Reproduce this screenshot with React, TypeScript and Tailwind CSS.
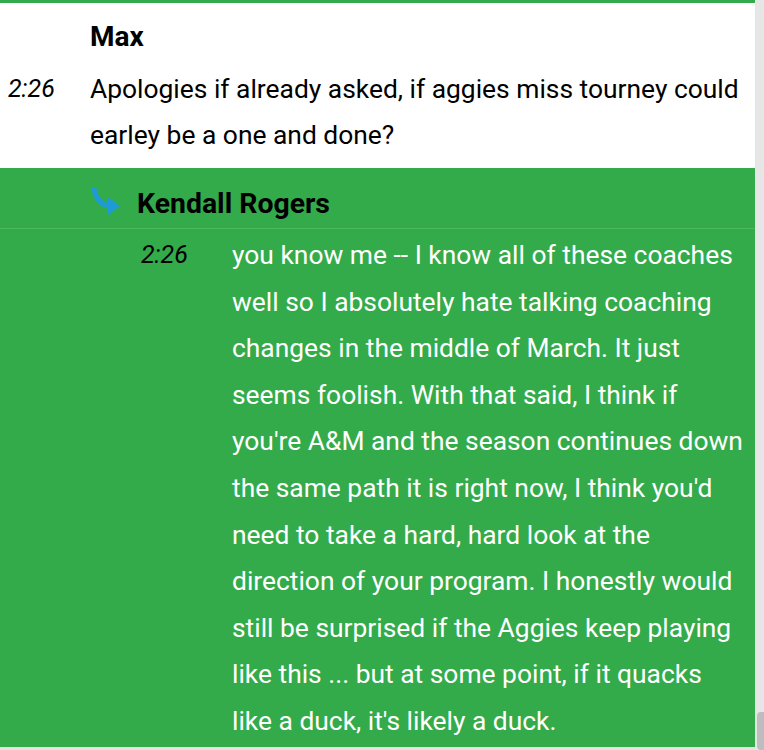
import React from "react";

const reply = [
  "you know me -- I know all of these coaches",
  "well so I absolutely hate talking coaching",
  "changes in the middle of March. It just",
  "seems foolish. With that said, I think if",
  "you're A&M and the season continues down",
  "the same path it is right now, I think you'd",
  "need to take a hard, hard look at the",
  "direction of your program. I honestly would",
  "still be surprised if the Aggies keep playing",
  "like this ... but at some point, if it quacks",
  "like a duck, it's likely a duck.",
];

function ReplyArrow() {
  return (
    <svg width="32" height="32" viewBox="0 0 32 32" className="shrink-0">
      <path d="M3 2 C5 12 10 18 19 19" stroke="#1e9ad6" strokeWidth="5" fill="none" strokeLinecap="round" />
      <path d="M17 10 L29 19 L17 28 Z" fill="#1e9ad6" />
    </svg>
  );
}

export default function App() {
  return (
    <div className="w-[764px] h-[750px] overflow-hidden flex bg-white font-['Roboto',sans-serif]">
      <div className="flex-1 flex flex-col">
        <div className="h-[3px] bg-[#33ab4a]" />
        {/* question */}
        <div className="h-[165px] bg-white flex flex-col pt-[16px]">
          <div className="pl-[90px] text-[28px] font-bold text-black leading-[36px]">Max</div>
          <div className="flex mt-[11px]">
            <div className="w-[90px] pl-[8px] text-[25px] italic text-black leading-[46px]">2:26</div>
            <div className="flex-1 text-[26.4px] text-black leading-[46px] whitespace-nowrap">
              Apologies if already asked, if aggies miss tourney could
              <br />
              earley be a one and done?
            </div>
          </div>
        </div>
        {/* answer */}
        <div className="flex-1 bg-[#33ab4a] flex flex-col">
          <div className="h-[61px] flex items-center pt-[10px] pl-[91px] gap-[14px] border-b border-[#4cb95f]">
            <ReplyArrow />
            <span className="text-[28.4px] font-bold text-black mt-[2px]">Kendall Rogers</span>
          </div>
          <div className="flex pt-[3px]">
            <div className="w-[232px] pl-[141px] text-[25px] italic text-black leading-[46.6px]">2:26</div>
            <div className="flex-1 text-[26.4px] text-white leading-[46.6px] whitespace-nowrap">
              {reply.map((l, i) => (
                <div key={i}>{l}</div>
              ))}
            </div>
          </div>
        </div>
        <div className="h-[3px] bg-[#e3e3e3]" />
      </div>
      <div className="w-[9px] bg-[#e6e6e6] flex flex-col justify-end">
        <div className="h-[38px] ml-[2px] bg-[#bdbdbd] rounded-l-[4px]" />
      </div>
    </div>
  );
}
